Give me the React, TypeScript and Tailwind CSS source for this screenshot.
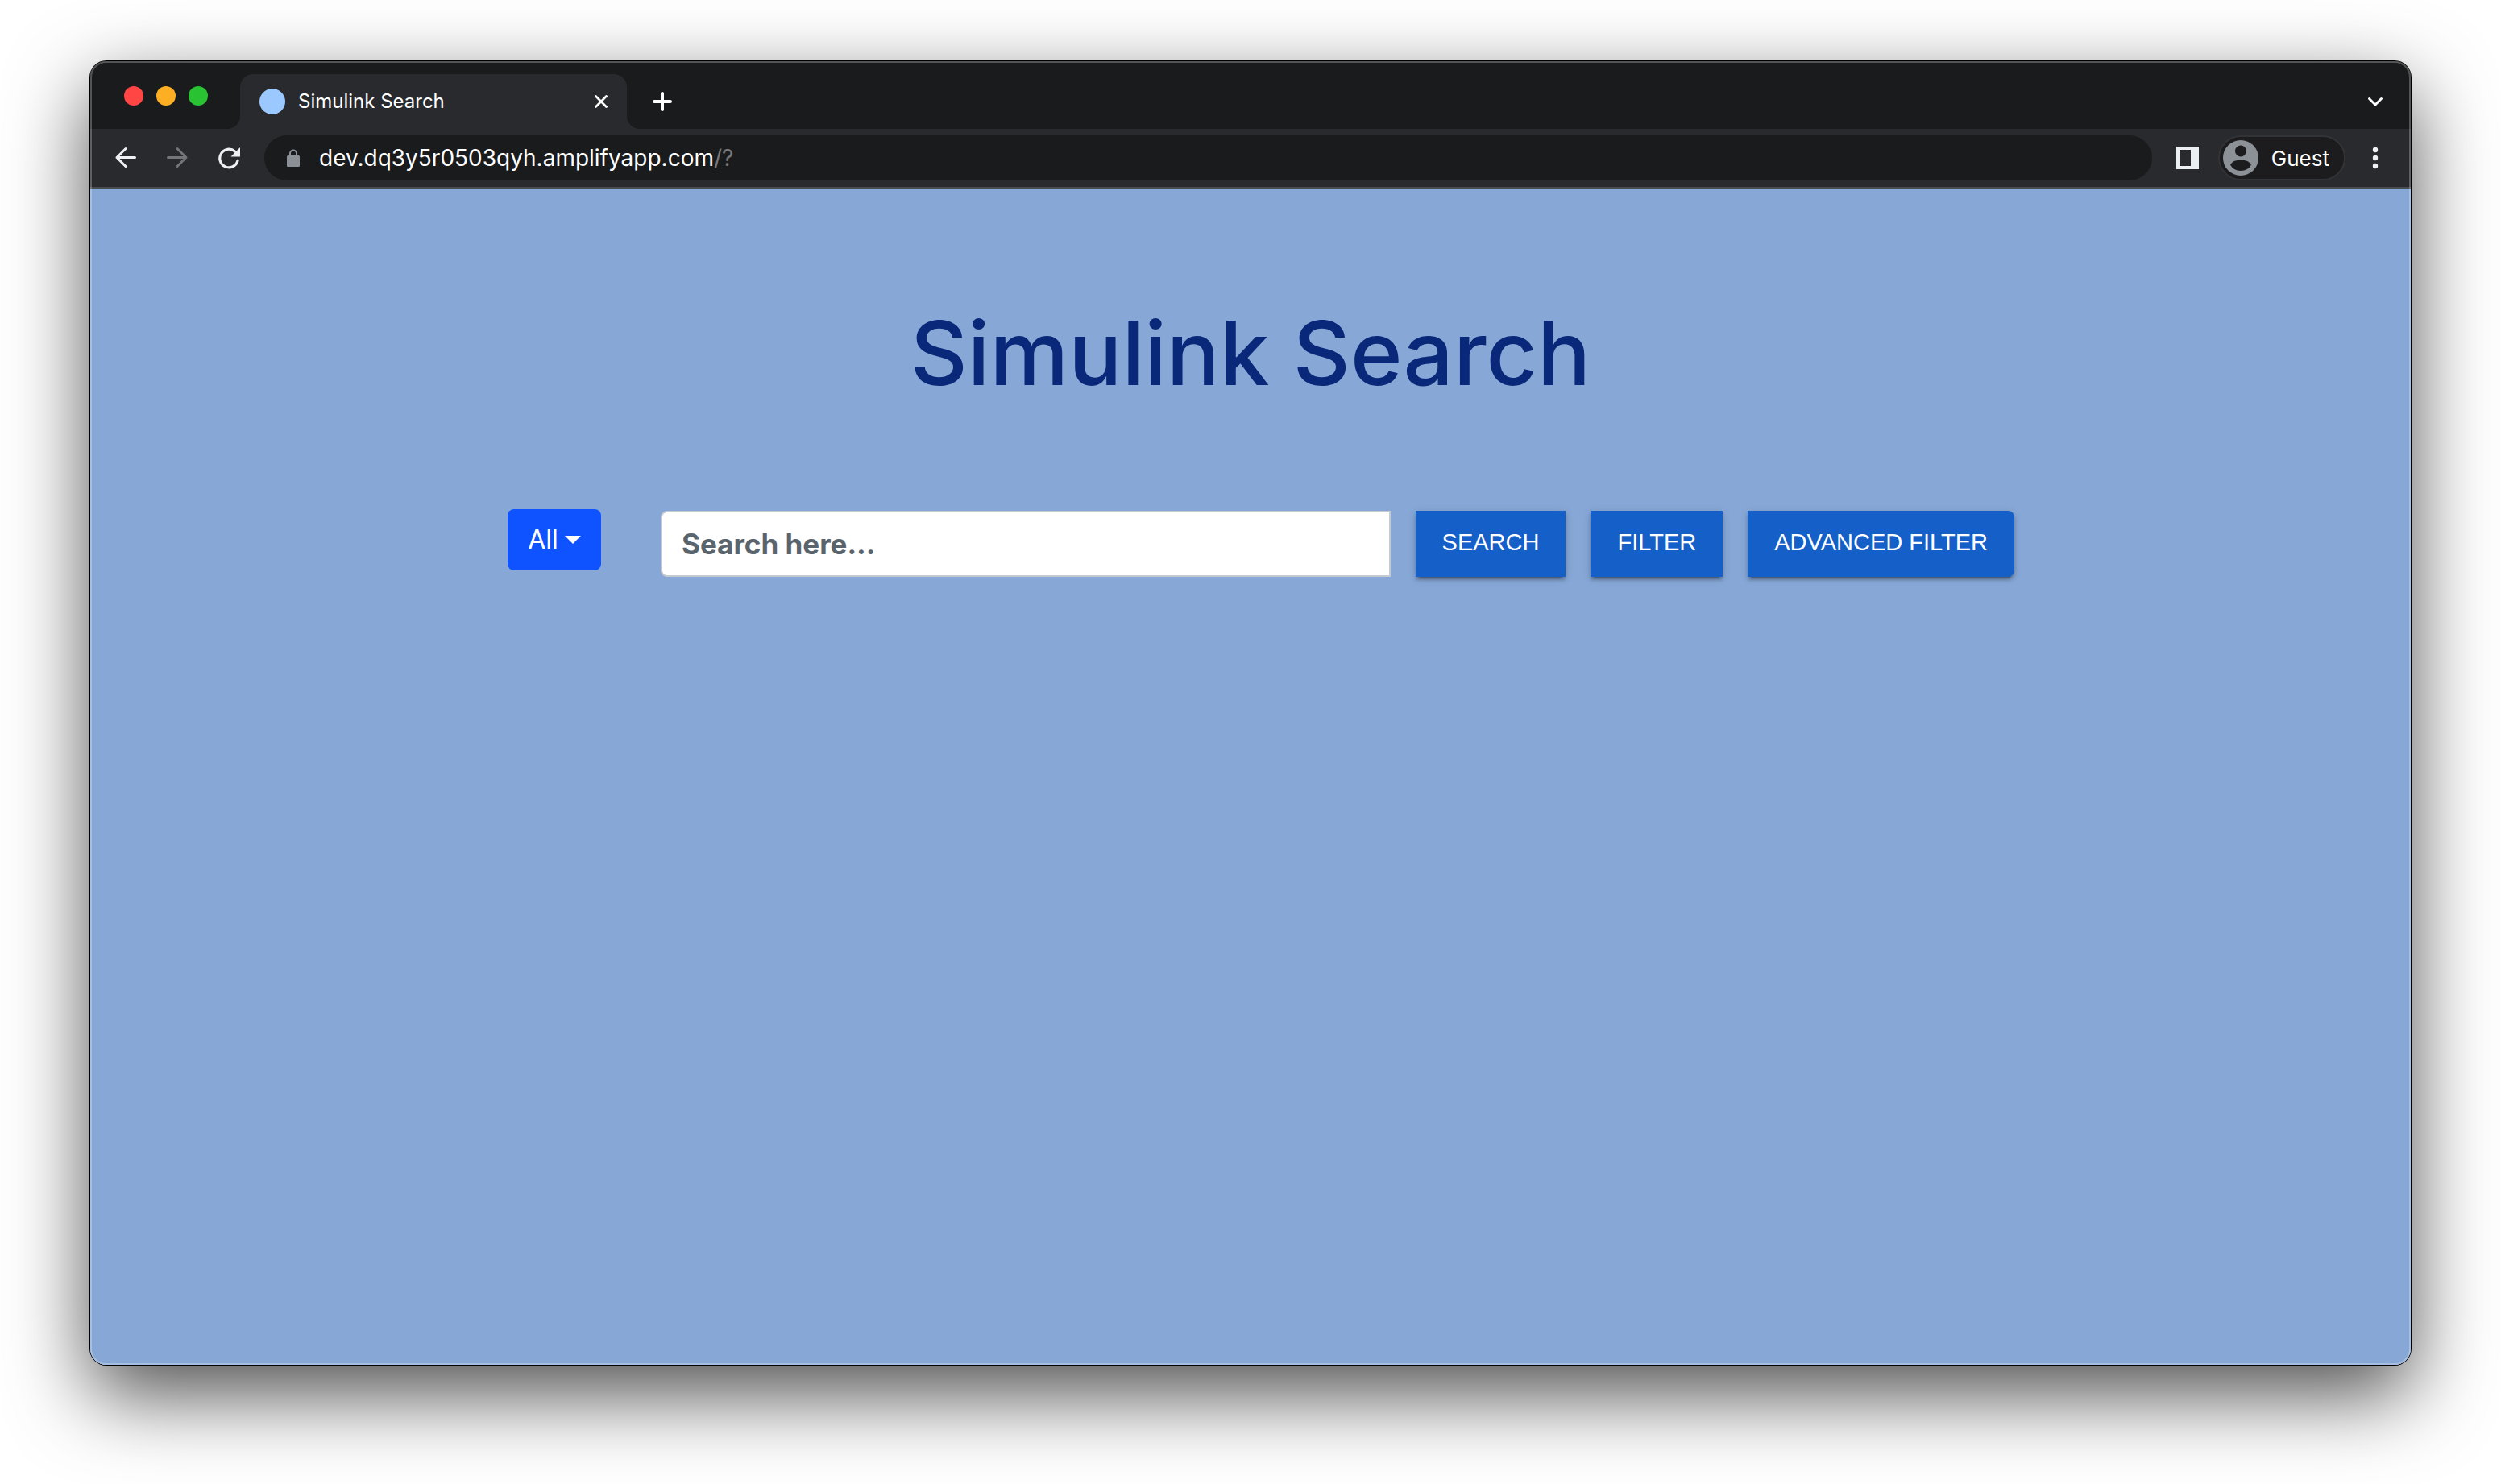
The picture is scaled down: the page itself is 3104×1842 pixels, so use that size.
import React from "react";

function TabStrip() {
  return (
    <div className="flex h-21 bg-[#292a2d]">
      <div className="flex w-[186px] items-center gap-4 rounded-br-[16px] bg-[#1a1b1c] pt-0.5 pl-[42px]">
        <button type="button" aria-label="Close window" className="size-6 rounded-full bg-[#ff4645]" />
        <button type="button" aria-label="Minimize window" className="size-6 rounded-full bg-[#fdaf24]" />
        <button type="button" aria-label="Zoom window" className="size-6 rounded-full bg-[#28c232]" />
      </div>
      <div className="w-[480px] bg-[linear-gradient(#1a1b1c_50%,#292a2d_50%)] pt-4">
        <div className="flex h-full items-center rounded-t-[16px] bg-[#292a2d] px-6">
          <span className="size-8 rounded-full bg-[#9ac8ff]" />
          <span className="ml-4 flex-1 text-2xl text-white">Simulink Search</span>
          <button type="button" aria-label="Close tab" className="size-4">
            <svg viewBox="0 0 16 16" className="size-4" fill="none" stroke="#fff" strokeWidth="2.8" strokeLinecap="round">
              <path d="M1.5 1.5l13 13M14.5 1.5l-13 13" />
            </svg>
          </button>
        </div>
      </div>
      <div className="flex flex-1 items-center justify-between rounded-bl-[16px] bg-[#1a1b1c] pt-4 pr-[34px] pl-8">
        <button type="button" aria-label="New tab">
          <svg viewBox="0 0 24 24" className="size-6" fill="none" stroke="#fff" strokeWidth="4" strokeLinecap="round">
            <path d="M2 12h20M12 2v20" />
          </svg>
        </button>
        <button type="button" aria-label="Search tabs">
          <svg viewBox="0 0 20 20" className="size-5" fill="none" stroke="#fff" strokeWidth="3" strokeLinecap="round" strokeLinejoin="miter">
            <path d="M2.5 6.5L10 14l7.5-7.5" />
          </svg>
        </button>
      </div>
    </div>
  );
}

function Toolbar() {
  return (
    <div className="flex h-[74px] items-center border-b-2 border-[#4a4b4f] bg-[#292a2d] pr-[34px] pl-[30px]">
      <div className="flex gap-9">
        <button type="button" aria-label="Back">
          <svg viewBox="0 0 28 28" className="size-7" fill="none" stroke="#eef1f4" strokeWidth="3" strokeLinecap="round" strokeLinejoin="round">
            <path d="M25.5 13.5H3M14 2.500L3 13.500L14 24.500" />
          </svg>
        </button>
        <button type="button" aria-label="Forward">
          <svg viewBox="0 0 28 28" className="size-7" fill="none" stroke="#747578" strokeWidth="3" strokeLinecap="round" strokeLinejoin="round">
            <path d="M2.500 13.500H25M14 2.500L25 13.500L14 24.500" />
          </svg>
        </button>
        <button type="button" aria-label="Reload">
          <svg viewBox="0 0 28 28" className="size-7" fill="none">
            <path d="M21.500 6A11.300 11.300 0 1 0 25 17.500" stroke="#eef1f4" strokeWidth="3.2" strokeLinecap="round" />
            <path d="M28 1v11.500H16.500z" fill="#eef1f4" />
          </svg>
        </button>
      </div>
      <label className="ml-[30px] flex h-14 flex-1 items-center rounded-full bg-[#1a1b1c] pl-7 text-[28px] text-white">
        <svg viewBox="0 0 16 22" className="mr-6 h-[22px] w-4" fill="none">
          <path d="M4 9V5.500a4 4 0 0 1 8 0V9" stroke="#8b9197" strokeWidth="2" />
          <rect y="8" width="16" height="14" rx="1.500" fill="#8b9197" />
        </svg>
        <input
          type="text"
          aria-label="Address"
          defaultValue="dev.dq3y5r0503qyh.amplifyapp.com"
          className="field-sizing-content bg-transparent outline-none"
        />
        <span className="text-[#77787a]">/?</span>
      </label>
      <button type="button" aria-label="Side panel" className="ml-[30px]">
        <svg viewBox="0 0 28 28" className="size-7">
          <path fillRule="evenodd" fill="#eceff2" d="M0 0h28v28H0zM4 4v20h14V4z" />
        </svg>
      </button>
      <button
        type="button"
        className="ml-6 flex h-14 items-center gap-4 rounded-full border-2 border-[#323336] bg-[#1c1c1e] pr-[18px] pl-1 text-[26px] text-white"
      >
        <svg viewBox="0 0 44 44" className="size-11">
          <circle cx="22" cy="22" r="22" fill="#8b9197" />
          <circle cx="22" cy="13.500" r="7" fill="#1c1c1e" />
          <path d="M9 30.500Q12 24.500 22 24.500T35 30.500Q31 38 22 38T9 30.500z" fill="#1c1c1e" />
        </svg>
        Guest
      </button>
      <button type="button" aria-label="More" className="ml-[27px]">
        <svg viewBox="0 0 20 28" className="h-7 w-5" fill="#eef1f4">
          <circle cx="10" cy="4" r="3.200" />
          <circle cx="10" cy="14" r="3.200" />
          <circle cx="10" cy="24" r="3.200" />
        </svg>
      </button>
    </div>
  );
}

const raised =
  "h-[82px] bg-[#1560c8] px-[33px] pb-0.5 font-['Liberation_Sans',sans-serif] text-[29px] whitespace-nowrap text-white shadow-[0_6px_2px_-4px_rgba(0,0,0,0.25),0_4px_4px_0_rgba(0,0,0,0.2),0_2px_10px_0_rgba(0,0,0,0.16)]";

function SearchPage() {
  return (
    <main className="flex-1 bg-[#87a8d7]">
      <h1 className="pt-[132px] text-center text-[110px] leading-[144px] font-medium text-[#0a2879]">
        Simulink Search
      </h1>
      <form className="flex items-start pt-[122px] pr-[492px] pl-[518px]" onSubmit={(e) => e.preventDefault()}>
        <button
          type="button"
          aria-haspopup="menu"
          className="flex h-[76px] w-[116px] items-center justify-center gap-2 rounded-lg bg-[#0f52ff] text-[32px] text-white"
        >
          All
          <span className="border-x-[10px] border-t-[10px] border-x-transparent border-t-white" />
        </button>
        <div className="mt-0.5 ml-[74px] flex flex-1 gap-[31px]">
          <input
            type="search"
            aria-label="Search"
            placeholder="Search here..."
            className="h-[82px] min-w-0 flex-1 rounded-l-lg border-2 border-[#c5cad0] bg-white px-6 text-[35px] font-bold text-[#5a646c] outline-none placeholder:text-[#5a646c]"
          />
          <button type="submit" className={raised}>SEARCH</button>
          <button type="button" className={raised}>FILTER</button>
          <button type="button" className={raised + " rounded-r-lg"}>ADVANCED FILTER</button>
        </div>
      </form>
    </main>
  );
}

export default function App() {
  return (
    <div className="flex min-h-screen flex-col bg-white px-28 pt-[76px] pb-[148px] font-['Inter',sans-serif]">
      <div className="relative flex flex-1 flex-col overflow-hidden rounded-[20px] shadow-[0_0_0_1px_#000,0_36px_100px_rgba(0,0,0,0.7)]">
        <TabStrip />
        <Toolbar />
        <SearchPage />
        <div className="pointer-events-none absolute inset-0 rounded-[20px] border-2 border-white/25" />
      </div>
    </div>
  );
}
